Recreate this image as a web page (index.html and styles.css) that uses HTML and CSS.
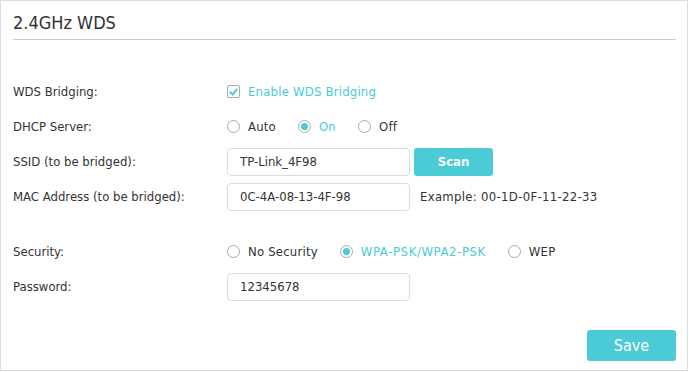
FILE: index.html
```html
<!DOCTYPE html>
<html lang="en">
<head>
    <meta charset="UTF-8">
    <title>2.4GHz WDS</title>
    <link rel="stylesheet" href="styles.css">
</head>
<body>
    <div class="panel">
        <h2 class="panel-title">2.4GHz WDS</h2>

        <form class="wds-form">
            <div class="row">
                <label class="label">WDS Bridging:</label>
                <div class="control">
                    <label class="option active">
                        <input type="checkbox" class="check" checked>
                        <span>Enable WDS Bridging</span>
                    </label>
                </div>
            </div>

            <div class="row">
                <label class="label">DHCP Server:</label>
                <div class="control">
                    <label class="option"><input type="radio" name="dhcp" class="radio"><span>Auto</span></label>
                    <label class="option active"><input type="radio" name="dhcp" class="radio" checked><span>On</span></label>
                    <label class="option"><input type="radio" name="dhcp" class="radio"><span>Off</span></label>
                </div>
            </div>

            <div class="row">
                <label class="label">SSID (to be bridged):</label>
                <div class="control">
                    <input type="text" class="text-input" value="TP-Link_4F98">
                    <button type="button" class="btn btn-scan">Scan</button>
                </div>
            </div>

            <div class="row">
                <label class="label">MAC Address (to be bridged):</label>
                <div class="control">
                    <input type="text" class="text-input" value="0C-4A-08-13-4F-98">
                    <span class="hint">Example: 00-1D-0F-11-22-33</span>
                </div>
            </div>

            <div class="row row-gap">
                <label class="label">Security:</label>
                <div class="control">
                    <label class="option"><input type="radio" name="sec" class="radio"><span>No Security</span></label>
                    <label class="option active"><input type="radio" name="sec" class="radio" checked><span class="wide">WPA-PSK/WPA2-PSK</span></label>
                    <label class="option"><input type="radio" name="sec" class="radio"><span>WEP</span></label>
                </div>
            </div>

            <div class="row">
                <label class="label">Password:</label>
                <div class="control">
                    <input type="text" class="text-input" value="12345678">
                </div>
            </div>

            <div class="actions">
                <button type="button" class="btn btn-save">Save</button>
            </div>
        </form>
    </div>
</body>
</html>
```

FILE: styles.css
```css
body {
    margin: 0;
    padding: 0;
    background: #fff;
    font-family: "DejaVu Sans Condensed", "DejaVu Sans", sans-serif;
    font-size: 13px;
    color: #333;
}

.panel {
    width: 663px;
    height: 369px;
    border: 1px solid #ddd;
    padding: 0 11px 0 12px;
}

.panel-title {
    margin: 0;
    height: 38px;
    line-height: 44px;
    font-size: 18px;
    font-weight: normal;
    color: #333;
    border-bottom: 1px solid #ccc;
}

.wds-form {
    padding-top: 34px;
}

.row {
    display: flex;
    align-items: center;
    height: 35px;
}

.row-gap {
    margin-top: 20px;
}

.label {
    width: 214px;
    flex: none;
}

.control {
    display: flex;
    align-items: center;
}

.option {
    display: flex;
    align-items: center;
    margin-right: 22px;
}

.option span {
    margin-left: 8px;
    letter-spacing: 0.2px;
}

.option span.wide {
    letter-spacing: 0.6px;
}

.option.active span {
    color: #4acbd6;
}

.radio,
.check {
    appearance: none;
    margin: 0;
    width: 13px;
    height: 13px;
    border: 1px solid #aaa;
    box-sizing: border-box;
    background: #fff;
    position: relative;
}

.radio {
    border-radius: 50%;
}

.radio:checked::after {
    content: "";
    position: absolute;
    left: 2px;
    top: 2px;
    width: 7px;
    height: 7px;
    border-radius: 50%;
    background: #4acbd6;
}

.check {
    border-radius: 2px;
}

.check:checked::after {
    content: "";
    position: absolute;
    left: 3px;
    top: 1px;
    width: 3px;
    height: 6px;
    border: solid #4acbd6;
    border-width: 0 2px 2px 0;
    transform: rotate(40deg);
}

.text-input {
    width: 183px;
    height: 28px;
    box-sizing: border-box;
    border: 1px solid #ddd;
    border-radius: 4px;
    padding: 0 12px;
    font-family: inherit;
    font-size: 13px;
    color: #333;
    outline: none;
}

.hint {
    margin-left: 10px;
    letter-spacing: 0.3px;
}

.btn {
    border: none;
    border-radius: 3px;
    background: #4acbd6;
    color: #fff;
    font-family: inherit;
    cursor: pointer;
}

.btn-scan {
    margin-left: 4px;
    width: 79px;
    height: 28px;
    font-size: 13px;
    font-weight: bold;
}

.actions {
    display: flex;
    justify-content: flex-end;
    margin-top: 26px;
}

.btn-save {
    width: 89px;
    height: 31px;
    font-size: 16px;
}
```
